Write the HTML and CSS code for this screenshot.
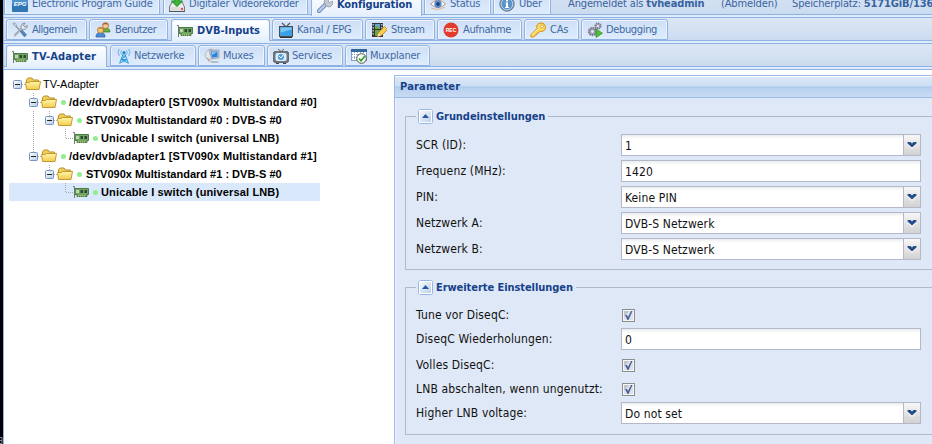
FILE: index.html
```html
<!DOCTYPE html>
<html lang="de">
<head>
<meta charset="utf-8">
<title>Tvheadend</title>
<link rel="stylesheet" href="styles.css">
</head>
<body>
<svg class="defs" width="0" height="0">
<defs>
<linearGradient id="gold" x1="0" y1="0" x2="0" y2="1"><stop offset="0" stop-color="#fff7a8"/><stop offset="1" stop-color="#f3cb50"/></linearGradient>
<linearGradient id="sq" x1="0" y1="0" x2="1" y2="1"><stop offset="0" stop-color="#fff"/><stop offset="1" stop-color="#b4cbe8"/></linearGradient>
<symbol id="tools" viewBox="0 0 16 16"><path d="M2 2l11 12" stroke="#8d9cac" stroke-width="1.6"/><path d="M1 1.5l2-.5 2 3-1 1z" fill="#dce4ec" stroke="#788796" stroke-width=".6"/><path d="M8 9l2-1 4.500 4.700-2 2.200z" fill="#5686c0" stroke="#40658f" stroke-width=".6"/><path d="M2.500 14.500L9.500 7M9.500 7C8 4 10 1 13 1.200L11.300 3.500l1.700 1.600 2.200-1.600C15.500 6 12.500 8.500 9.500 7z" fill="#e9edf2" stroke="#7d8793"/><path d="M2.500 13.500l7-7" stroke="#a6afb9" stroke-width="2.200"/></symbol>
<symbol id="users" viewBox="0 0 16 16"><path d="M6 10c0-3 2-4 4.500-4S15 7 15 10z" fill="#64ae3c" stroke="#397c26" stroke-width=".7"/><circle cx="10.500" cy="3.700" r="3" fill="#f3ca91" stroke="#945b2f" stroke-width=".7"/><path d="M7.500 3c0-3 6-3 6 0-2-1-4-1-6 0z" fill="#a96330"/><path d="M1 15c0-3.500 2-4.500 4.500-4.500S10 11.500 10 15z" fill="#4b8cd8" stroke="#2a5b9c" stroke-width=".7"/><circle cx="5.500" cy="8.200" r="3" fill="#f5c77a" stroke="#9a6425" stroke-width=".7"/><path d="M2.500 7.500c0-3 6-3 6 0-2-1-4-1-6 0z" fill="#d78b2e"/></symbol>
<symbol id="card" viewBox="0 0 16 16"><path d="M0 2.500h1.500V14" fill="none" stroke="#777"/><path d="M2 4.500h13.500v6H14v2H4v-2H2z" fill="#73a567" stroke="#4a7d46"/><path d="M3 6h3v3H3z" fill="#b9dba7"/><path d="M7.500 6h2.500v3H7.500zM11.500 6H14v3h-2.500z" fill="#2d4a30"/><path d="M5 12h8" stroke="#e3d477" stroke-dasharray="1 1"/></symbol>
<symbol id="tv" viewBox="0 0 16 16"><path d="M4 1l4 4 4-4" fill="none" stroke="#555" stroke-width="1.200"/><rect x="1.500" y="4.500" width="13" height="10" fill="#3ba1e7" stroke="#4b4b4b"/><path d="M2.500 5.500h11v2l-11 3z" fill="#7ac7f5"/><path d="M2 15.500h12" stroke="#333"/></symbol>
<symbol id="stream" viewBox="0 0 16 16"><rect x="1" y="1" width="11" height="14" fill="#353535"/><path d="M2.200 2v12M10.800 2v12" stroke="#ddd" stroke-width="1.200" stroke-dasharray="1.500 1.500"/><path d="M4 2h5v5H4z" fill="#62a6d8"/><path d="M4 5l2-1 3 2v1H4zM4 8h5v6H4z" fill="#6ca841"/><path d="M6.500 14.500l1-4 6-6 3 3-6 6z" fill="#f8cc4d" stroke="#b97a25" stroke-width=".8"/><path d="M6.500 14.500l1-3 2 2z" fill="#f9ead0"/></symbol>
<symbol id="rec" viewBox="0 0 16 16"><circle cx="8" cy="8" r="7.500" fill="#df3c2b"/><text x="8" y="10" text-anchor="middle" class="rec-text">REC</text></symbol>
<symbol id="key" viewBox="0 0 16 16"><path d="M1 12.500L7 6.500C6 3 8 1 11 1c3 0 4.500 2 4.500 4.500C15.500 8.500 13 10 10 9.300L8.500 11H7v1.500H5.500L5 14 3.500 15H1z" fill="#fbd75e" stroke="#d1921e"/><circle cx="12" cy="4.500" r="1.400" fill="#fff" stroke="#d1921e" stroke-width=".7"/><path d="M2 13l6-6" stroke="#fff1a5"/></symbol>
<symbol id="debug" viewBox="0 0 16 16"><circle cx="5.500" cy="9.500" r="3.500" fill="#aaaab9" stroke="#77778b" stroke-width="2.400" stroke-dasharray="1.500 .8"/><circle cx="5.500" cy="9.500" r="1.300" fill="#eef"/><circle cx="11" cy="4" r="2.600" fill="#b6b6c4" stroke="#77778b" stroke-width="2" stroke-dasharray="1.300 .7"/><circle cx="11" cy="4" r="1" fill="#eef"/><path d="M9 7l6.500 4.200L9 15.500z" fill="#52bd35" stroke="#2a8f1c" stroke-width=".7"/></symbol>
<symbol id="mast" viewBox="0 0 16 16"><g fill="none" stroke="#289adb" stroke-width="1"><path d="M7.500 5L3.500 15.500M8.500 5l4 10.500M6.500 8h3L5 11.500h6L4 15M9.500 8L5 11.500l7 3.500"/><path d="M5.500 2.500q-1.500 2 0 4M3.300 1q-2.500 3.500 0 7M10.500 2.500q1.500 2 0 4M12.700 1q2.500 3.500 0 7" stroke="#63b7e8"/></g><circle cx="8" cy="4.500" r="1.500" fill="#2283c4"/></symbol>
<symbol id="mux" viewBox="0 0 16 16"><path d="M1 7c1-4 4-6 7-6L6 6l2 5c-4 1-7-1-7-4z" fill="#e2e5e9" stroke="#a5adb6" stroke-width=".8"/><path d="M5 2h10v8l-7 1z" fill="#bdc7d2" stroke="#949ba5" stroke-width=".7"/><path d="M7 3.500h6.500V9L8 9.500z" fill="#2c83dc"/><path d="M8 4h5l-5 3z" fill="#8cc5f5"/><path d="M4 11l2 2h7l2 1-1 1H8l-4-2z" fill="#b9bcc2"/><path d="M3 10l2 3" stroke="#c59067"/></symbol>
<symbol id="service" viewBox="0 0 16 16"><path d="M5 1l3 2.500L11 1" fill="none" stroke="#666"/><rect x=".7" y="3.700" width="14.600" height="10.600" rx="1" fill="#77818b" stroke="#4e5862"/><rect x="2.500" y="5" width="11" height="8" rx="2" fill="#dcecf9"/><circle cx="8" cy="9" r="3" fill="#4e99d4"/><path d="M6 8l2 2 2-3" fill="none" stroke="#fff"/><path d="M3 15.500h3M10 15.500h3" stroke="#444"/></symbol>
<symbol id="sched" viewBox="0 0 16 16"><rect x=".5" y="1.500" width="15" height="11" fill="#fff" stroke="#7da0cc"/><path d="M0 1h16v3H0z" fill="#34679f"/><path d="M1 6.500h14M1 9.500h14M3.500 4v8M6.500 4v8M9.500 4v8M12.500 4v8" stroke="#86a9d3" stroke-dasharray="1 1"/><circle cx="10.500" cy="10.500" r="4.800" fill="#f6fff3" stroke="#555"/><path d="M8 10.500l2 2.200 3.700-4.500" fill="none" stroke="#2f9e28" stroke-width="1.700"/></symbol>
<symbol id="epg" viewBox="0 0 16 16"><rect width="16" height="16" rx="1" fill="#3277b5"/><path d="M0 0h16v8H0z" fill="#4f93cc"/><text x="8" y="10" text-anchor="middle" class="epg-text">EPG</text></symbol>
<symbol id="disk" viewBox="0 0 16 16"><path d="M3 6h10l2.500 5v4H.5v-4z" fill="#eee" stroke="#777"/><path d="M1 11h14v4H1z" fill="#ddd"/><path d="M6 1h4v4h3.500L8 10.500 2.500 5H6z" fill="#3bb535" stroke="#1d8b26"/><path d="M12 13h2" stroke="#e12626" stroke-width="1.500"/><path d="M0 15.500h16" stroke="#555"/></symbol>
<symbol id="wrench" viewBox="0 0 16 16"><path d="M2 14l8-8" stroke="#7388b4" stroke-width="4.200" stroke-linecap="round"/><path d="M2 14l8-8" stroke="#b7ccf0" stroke-width="2.400" stroke-linecap="round"/><path d="M7 4l3-3.500h3L11 4l1.500 1.500L16 4v3l-3 3-4-1z" fill="#c6c9d3" stroke="#888d9b" stroke-width=".7"/></symbol>
<symbol id="eye" viewBox="0 0 16 16"><path d="M.5 8Q8 0 15.500 8 8 15 .5 8z" fill="#fff" stroke="#bc9275"/><circle cx="8" cy="8" r="3.700" fill="#5489d1"/><circle cx="8" cy="8" r="1.700" fill="#173764"/><path d="M1 12q7 3 14-1" fill="none" stroke="#e1b18d"/></symbol>
<symbol id="info" viewBox="0 0 16 16"><circle cx="8" cy="8" r="7.200" fill="#5b92c8" stroke="#747e8a"/><circle cx="8" cy="8" r="5.800" fill="none" stroke="#cbdff2" stroke-width=".8"/><path d="M7 3.500h2v2H7zM6.500 6.500H9V11h1v1H6v-1h1V7.500h-.5z" fill="#fff"/></symbol>
<symbol id="folder" viewBox="0 0 16 16"><path d="M1.500 12V3.500L3 2h4l1.500 2H13.500v9z" fill="#f0cc58" stroke="#b8902d"/><path d="M1.500 13.500L.5 6.500h3.500L5.500 5.500h10L14 13.500z" fill="url(#gold)" stroke="#c39a33"/></symbol>
<symbol id="square" viewBox="0 0 16 18"><path d="M13 9.500h3" stroke="#aaa" stroke-dasharray="1 1"/><rect x="4.500" y="5.500" width="8" height="8" rx="1" fill="url(#sq)" stroke="#7894ba"/><path d="M6 9.500h5" stroke="#222"/></symbol>
<symbol id="minus" viewBox="0 0 16 18"><path d="M8.500 0v5" stroke="#aaa" stroke-dasharray="1 1"/><use href="#square" width="16" height="18"/></symbol>
<symbol id="elbow" viewBox="0 0 16 18"><path d="M8.500 0v10M9 9.500h7" fill="none" stroke="#aaa" stroke-dasharray="1 1"/></symbol>
<symbol id="vline" viewBox="0 0 16 18"><path d="M8.500 0v18" stroke="#aaa" stroke-dasharray="1 1"/></symbol>
<symbol id="up" viewBox="0 0 15 15"><rect x=".5" y=".5" width="14" height="14" rx="2" fill="url(#sq)" stroke="#94b7e5"/><path d="M1.500 1.500h12v12h-12z" fill="none" stroke="#fff"/><path d="M4 9h7L7.500 5z" fill="#2858a0"/></symbol>
<symbol id="down" viewBox="0 0 16 20"><path d="M3 7h3l2 2 2-2h3v2l-5 5-5-5z" fill="#fff"/><path d="M3.500 7h3L8 8.500 9.500 7h3v1.500L8 12.500 3.500 8.500z" fill="#244c8a"/></symbol>
<symbol id="check" viewBox="0 0 13 13"><rect x=".5" y=".5" width="12" height="12" fill="#f5f5f5" stroke="#8d8f8f"/><path d="M2 2h9v9H2z" fill="#dfe2e5"/><path d="M2 2h5L2 8z" fill="#bdc4cd"/><path d="M3 6h2l1 2 3-6h1.500L6.500 11H5.500z" fill="#4860a0"/></symbol>
</defs>
</svg>
<div class="desktop">
<div class="app">
<nav class="bar bar-main">
<div class="tab t-epg"><svg><use href="#epg"/></svg><span>Electronic Program Guide</span></div>
<div class="tab t-dvr"><svg><use href="#disk"/></svg><span>Digitaler Videorekorder</span></div>
<div class="tab active t-konf"><svg><use href="#wrench"/></svg><span>Konfiguration</span></div>
<div class="tab t-status"><svg><use href="#eye"/></svg><span>Status</span></div>
<div class="tab t-about"><svg><use href="#info"/></svg><span>Über</span></div>
<div class="login"><span class="who">Angemeldet als <b>tvheadmin</b></span><span class="logout">(Abmelden)</span><span class="space">Speicherplatz: <b>5171GiB/136</b></span></div>
</nav>
<nav class="bar">
<div class="tab t-allg"><svg><use href="#tools"/></svg><span>Allgemein</span></div>
<div class="tab t-ben"><svg><use href="#users"/></svg><span>Benutzer</span></div>
<div class="tab active t-dvb"><svg><use href="#card"/></svg><span>DVB-Inputs</span></div>
<div class="tab t-kanal"><svg><use href="#tv"/></svg><span>Kanal / EPG</span></div>
<div class="tab t-stream"><svg><use href="#stream"/></svg><span>Stream</span></div>
<div class="tab t-rec"><svg><use href="#rec"/></svg><span>Aufnahme</span></div>
<div class="tab t-cas"><svg><use href="#key"/></svg><span>CAs</span></div>
<div class="tab t-debug"><svg><use href="#debug"/></svg><span>Debugging</span></div>
</nav>
<nav class="bar">
<div class="tab active t-tv"><svg><use href="#card"/></svg><span>TV-Adapter</span></div>
<div class="tab t-netz"><svg><use href="#mast"/></svg><span>Netzwerke</span></div>
<div class="tab t-mux"><svg><use href="#mux"/></svg><span>Muxes</span></div>
<div class="tab t-serv"><svg><use href="#service"/></svg><span>Services</span></div>
<div class="tab t-plan"><svg><use href="#sched"/></svg><span>Muxplaner</span></div>
</nav>
<main>
<div class="tree">
<div class="node root"><svg class="ind"><use href="#square"/></svg><svg class="ico"><use href="#folder"/></svg><span>TV-Adapter</span></div>
<div class="node"><i class="ind"></i><svg class="ind"><use href="#minus"/></svg><svg class="ico"><use href="#folder"/></svg><i class="dot"></i><span class="dev">/dev/dvb/adapter0 [STV090x Multistandard #0]</span></div>
<div class="node"><i class="ind"></i><svg class="ind"><use href="#vline"/></svg><svg class="ind"><use href="#minus"/></svg><svg class="ico"><use href="#folder"/></svg><i class="dot"></i><span class="fe">STV090x Multistandard #0 : DVB-S #0</span></div>
<div class="node"><i class="ind"></i><svg class="ind"><use href="#vline"/></svg><i class="ind"></i><svg class="ind"><use href="#elbow"/></svg><svg class="ico"><use href="#card"/></svg><i class="dot"></i><span class="leaf">Unicable I switch (universal LNB)</span></div>
<div class="node"><i class="ind"></i><svg class="ind"><use href="#minus"/></svg><svg class="ico"><use href="#folder"/></svg><i class="dot"></i><span class="dev">/dev/dvb/adapter1 [STV090x Multistandard #1]</span></div>
<div class="node"><i class="ind"></i><i class="ind"></i><svg class="ind"><use href="#minus"/></svg><svg class="ico"><use href="#folder"/></svg><i class="dot"></i><span class="fe">STV090x Multistandard #1 : DVB-S #0</span></div>
<div class="node selected"><i class="ind"></i><i class="ind"></i><i class="ind"></i><svg class="ind"><use href="#elbow"/></svg><svg class="ico"><use href="#card"/></svg><i class="dot"></i><span class="leaf">Unicable I switch (universal LNB)</span></div>
</div>
<section class="panel">
<header><span>Parameter</span></header>
<div class="group basic">
<div class="legend"><svg><use href="#up"/></svg><span>Grundeinstellungen</span></div>
<div class="row"><label>SCR (ID):</label><div class="field">1<svg><use href="#down"/></svg></div></div>
<div class="row"><label>Frequenz (MHz):</label><div class="field">1420</div></div>
<div class="row"><label>PIN:</label><div class="field">Keine PIN<svg><use href="#down"/></svg></div></div>
<div class="row"><label>Netzwerk A:</label><div class="field">DVB-S Netzwerk<svg><use href="#down"/></svg></div></div>
<div class="row"><label>Netzwerk B:</label><div class="field">DVB-S Netzwerk<svg><use href="#down"/></svg></div></div>
</div>
<div class="group extended">
<div class="legend"><svg><use href="#up"/></svg><span>Erweiterte Einstellungen</span></div>
<div class="row tick"><label>Tune vor DiseqC:</label><svg><use href="#check"/></svg></div>
<div class="row"><label>DiseqC Wiederholungen:</label><div class="field">0</div></div>
<div class="row tick"><label>Volles DiseqC:</label><svg><use href="#check"/></svg></div>
<div class="row tick"><label>LNB abschalten, wenn ungenutzt:</label><svg><use href="#check"/></svg></div>
<div class="row"><label>Higher LNB voltage:</label><div class="field">Do not set<svg><use href="#down"/></svg></div></div>
</div>
</section>
</main>
</div>
<svg class="fragment" viewBox="0 0 3 7"><path d="M0 .5h2v6H0M0 3.500h2" fill="none" stroke="#888"/></svg>
</div>
</body>
</html>
```
FILE: styles.css
```css
* { box-sizing: border-box; }
html, body { margin: 0; height: 444px; overflow: hidden; }
body { font: 12px/14px "DejaVu Sans Condensed", "DejaVu Sans", sans-serif; font-stretch: condensed; color: #111; }
svg { display: block; flex: none; }
.defs { position: absolute; }
.desktop { position: relative; width: 932px; height: 444px; padding-left: 3px; background: #000; overflow: hidden; }
.fragment { position: absolute; left: 0; bottom: 0; width: 3px; height: 7px; }
.app { height: 444px; background: #fff; border-left: 1px solid #8db2e3; display: flex; flex-direction: column; }

/* Tab bars */
.bar { flex: none; display: flex; align-items: flex-end; height: 26px; padding: 0 0 3px 2px; border-top: 1px solid #8db2e3; background: linear-gradient(#dce7f5, #cbdbef 22px, #8db2e3 22px, #8db2e3 23px, #deecfd 23px); font-size: 11px; letter-spacing: -.22px; white-space: nowrap; overflow: hidden; }
.bar-main { height: 17px; border-top: 0; padding-left: 0; background: linear-gradient(#d3e0f2, #cbdbef 14px, #8db2e3 14px, #8db2e3 15px, #deecfd 15px); padding-bottom: 2px; }
.tab { flex: none; display: flex; align-items: center; height: 21px; margin-right: 2px; padding-left: 5px; border: 1px solid #8db2e3; border-radius: 3px 3px 0 0; background: linear-gradient(#cfdff5, #deecfd); box-shadow: inset 1px 1px #eef5fe, inset -1px 0 #eef5fe; color: #416aa3; }
.tab svg { width: 16px; height: 16px; margin-right: 4px; }
.tab.active { height: 22px; margin-bottom: -1px; border-bottom: 0; background: linear-gradient(#fff, #e5f0fd); color: #15428b; font-weight: bold; letter-spacing: 0; }
.bar-main .tab { height: 23px; }
.bar-main .tab.active { height: 24px; letter-spacing: -.12px; }
.t-epg { width: 156px; margin-right: 3px; padding-left: 7px; }
.t-dvr { width: 145px; margin-right: 3px; }
.t-konf { width: 111px; }
.t-status { width: 67px; }
.t-about { width: 58px; }
.t-allg { width: 81px; letter-spacing: -.5px; }
.t-ben { width: 79px; margin-right: 3px; letter-spacing: -.4px; }
.t-dvb { width: 99px; }
.t-kanal { width: 91px; }
.t-kanal svg, .t-mux svg, .t-serv svg { margin-right: 3px; }
.t-stream { width: 70px; letter-spacing: -.4px; }
.t-rec { width: 85px; letter-spacing: -.35px; }
.t-cas { width: 55px; }
.t-debug { width: 87px; letter-spacing: -.35px; }
.t-debug svg { margin-right: 3px; }
.t-tv { width: 101px; margin-right: 3px; }
.t-tv.active { letter-spacing: .15px; }
.t-netz { width: 86px; }
.t-netz svg { margin-right: 2px; }
.t-mux { width: 67px; }
.t-serv { width: 76px; }
.t-plan { width: 85px; }
.t-plan svg { margin-right: 3px; }
.rec-text { font: bold 5px "Liberation Sans", sans-serif; fill: #fff; letter-spacing: 0; }
.epg-text { font: italic bold 6px "Liberation Sans", sans-serif; fill: #fff; letter-spacing: 0; }
.login { display: flex; align-items: center; height: 23px; color: #3764a0; margin-left: 15px; letter-spacing: -.14px; }
.who { width: 153px; }
.logout { width: 71px; }

/* Device tree */
main { flex: 1; display: flex; min-height: 0; border-top: 1px solid #8db2e3; }
.tree { flex: none; width: 311px; margin: 5px 74px 0 5px; font: bold 11px/18px "Liberation Sans", Arial, sans-serif; color: #000; white-space: nowrap; }
.node { display: flex; align-items: center; height: 18px; }
.node.root { font-weight: normal; }
.node.selected { background: #d9e8fb; }
.ind { width: 16px; height: 18px; flex: none; }
.ico { width: 16px; height: 16px; }
.root span { margin-left: 2px; }
.dot { flex: none; width: 5px; height: 5px; margin: 1px 3px 0 4px; border-radius: 50%; background: #90ee90; }
.fe { margin-left: 1px; }
.dev { letter-spacing: .175px; }
.leaf { letter-spacing: .14px; }

/* Parameter panel */
.panel { flex: 1; margin-top: 5px; padding-left: 10px; background: #dfe8f6; border: solid #99bbe8; border-width: 1px 0 0 1px; box-shadow: inset 1px 0 #edf4fd; overflow: hidden; }
.panel header { height: 22px; margin-left: -10px; padding: 4px 0 0 5px; border-bottom: 1px solid #99bbe8; background: linear-gradient(#fff 1px, #dbe7f6 1px, #cddff4 10px, #abc7ec 11px, #b8d0ef 12px, #c8dbf3); color: #15428b; font-size: 11px; font-weight: bold; letter-spacing: .2px; }
.group { width: 540px; border: 1px solid #b5b8c8; position: relative; padding-left: 10px; }
.basic { height: 154px; margin-top: 18px; padding-top: 17px; }
.extended { height: 148px; margin-top: 17px; padding-top: 16px; }
.legend { position: absolute; top: -8px; left: 10px; display: flex; align-items: center; height: 15px; padding: 0 3px 0 2px; background: #dfe8f6; color: #15428b; font-size: 11px; font-weight: bold; letter-spacing: -.06px; }
.legend svg { width: 15px; height: 15px; margin-right: 3px; }
.row { display: flex; height: 26px; white-space: nowrap; }
.row label { width: 205px; padding-top: 4px; flex: none; letter-spacing: .15px; }
.field { display: flex; justify-content: space-between; width: 300px; height: 22px; padding: 4px 0 0 3px; border: 1px solid #b5b8c8; background: linear-gradient(#e9edef, #fff 4px); letter-spacing: .12px; }
.field svg { width: 17px; height: 20px; margin-top: -4px; border-left: 1px solid #b5b8c8; background: linear-gradient(#f7f7f7, #d2d2d2); }
.row.tick { height: 24px; }
.tick svg { width: 13px; height: 13px; margin: 5px 0 0 1px; }
```
